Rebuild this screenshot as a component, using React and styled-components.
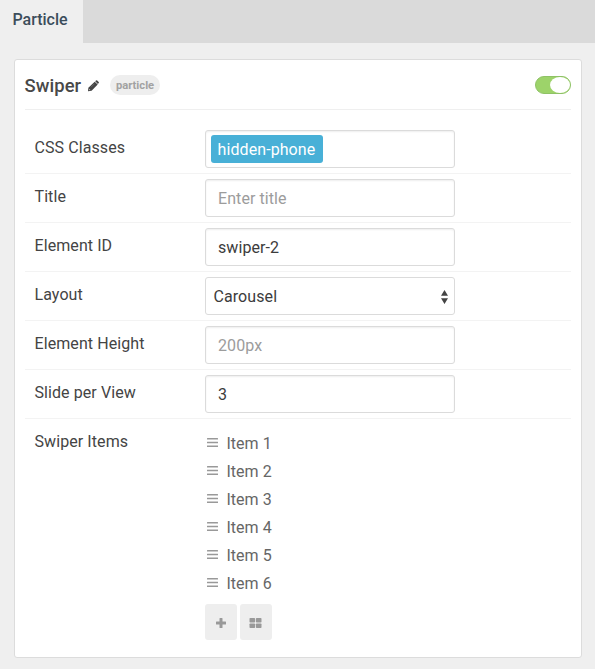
import React from 'react';
import styled, { createGlobalStyle } from 'styled-components';

const GlobalStyle = createGlobalStyle`
  * { box-sizing: border-box; }
  body {
    margin: 0;
    background: #efefef;
    color: #444;
    font: 16px/24px Roboto, sans-serif;
    letter-spacing: 0.08px;
    overflow: hidden;
  }
`;

const Page = styled.div`
  height: 669px;
  display: flex;
  flex-direction: column;
`;

const TabBar = styled.nav`
  height: 43px;
  flex: none;
  display: flex;
  background: #dadada;
`;

const Tab = styled.div`
  width: 83px;
  padding: 8px 0 0 12.4px;
  background: #efefef;
  color: #3b4d5b;
  font-weight: 500;
  letter-spacing: 0;
`;

const Card = styled.section`
  width: 568px;
  height: 599px;
  margin: 16px 0 0 14px;
  padding: 0 10px 0 9.5px;
  background: #fff;
  border: 1px solid #dcdcdc;
  border-radius: 3px;
`;

const Header = styled.header`
  height: 50px;
  display: flex;
  align-items: center;
  border-bottom: 1px solid #efefef;
  margin-bottom: 15px;
`;

const Heading = styled.h4`
  margin: 2px 0 0;
  font-size: 18.4px;
  font-weight: 500;
  color: #484848;
`;

const Badge = styled.span`
  height: 20px;
  margin-left: 10.5px;
  padding: 1px 6.3px 0;
  border-radius: 10px;
  background: #eee;
  color: #a2a2a2;
  font-size: 11.2px;
  line-height: 20px;
  font-weight: 700;
  letter-spacing: 0;
  margin-top: 1px;
`;

const Toggle = styled.div`
  width: 36px;
  height: 18px;
  margin-left: auto;
  border: 1px solid #8fc266;
  border-radius: 9px;
  background: #9dd36a;
  display: flex;
  justify-content: flex-end;
`;

const Knob = styled.div`
  width: 20px;
  height: 16px;
  border-radius: 10px / 8px;
  background: #fff;
`;

const Row = styled.div`
  display: flex;
  padding: 5px 0 5px 10px;
  border-bottom: ${(p) => (p.$last ? '0' : '1px solid #f3f3f3')};
`;

const Label = styled.div`
  width: 170.5px;
  flex: none;
  padding-top: 6px;
`;

const Field = styled.div`
  width: 250px;
  height: 38px;
  display: flex;
  align-items: center;
  justify-content: space-between;
  padding: ${(p) => p.$padding || '2px 12px 0'};
  border: 1px solid #dbdbdb;
  border-radius: 3px;
  box-shadow: ${(p) => (p.$flat ? 'none' : 'inset 0 1px 2px rgba(0, 0, 0, 0.07)')};
  color: ${(p) => (p.$muted ? '#9c9c9c' : '#3c3c3c')};
`;

const Tag = styled.span`
  height: 28px;
  padding: 1px 7.4px 0 6.6px;
  border-radius: 3px;
  background: #48b0d7;
  color: #fff;
  line-height: 28px;
`;

const Items = styled.ul`
  margin: 6px 0 0;
  padding: 0;
  list-style: none;
`;

const Item = styled.li`
  height: 28px;
  display: flex;
  align-items: center;
  padding-left: 2px;
  color: #666;
  line-height: 28px;
  letter-spacing: 0.04px;

  svg { margin: 0 8.4px 2px 0; }
`;

const Buttons = styled.div`
  display: flex;
  gap: 3px;
  margin-top: 6px;
`;

const IconButton = styled.div`
  width: 32px;
  height: 36px;
  display: flex;
  align-items: center;
  justify-content: center;
  border-radius: 3px;
  background: #eee;
  color: #999;
  padding: 2px 1px 0 0;
`;

const PencilMark = styled.svg`
  margin: 2px 0 0 7px;
`;

const Pencil = () => (
  <PencilMark width="11" height="12" viewBox="0 0 11 12" fill="#444">
    <path d="M0 11.3 .4 7.800 6.700 1.700 9.700 4.600 3.600 10.800Z" />
    <path d="m7.200 1.200.8-.8q.6-.5 1.200 0l1.500 1.500q.5.600 0 1.200l-.8.800Z" />
    <path d="m1.300 8.900 1.100 1.100-.6.200-.7-.7Z" fill="#fff" />
    <path d="M3 7.200 6.300 3.900" stroke="#999" strokeWidth=".4" />
  </PencilMark>
);

const Bars = () => (
  <svg width="11" height="10" viewBox="0 0 11 10" fill="#999">
    <rect y="0" width="11" height="1.600" rx=".2" />
    <rect y="3.700" width="11" height="1.600" rx=".2" />
    <rect y="7.400" width="11" height="1.600" rx=".2" />
  </svg>
);

const Plus = () => (
  <svg width="10" height="10" viewBox="0 0 10 10" fill="currentColor">
    <path d="M4 0h2q.5 0 .5.5v3h3q.5 0 .5.5v2q0 .5-.5.5h-3v3q0 .5-.5.5H4q-.5 0-.5-.5v-3h-3Q0 6.500 0 6V4q0-.5.5-.5h3v-3Q3.500 0 4 0Z" />
  </svg>
);

const Grid = () => (
  <svg width="13" height="10" viewBox="0 0 13 10" fill="currentColor">
    <rect x=".5" width="5.600" height="4.600" rx=".8" />
    <rect x="6.900" width="5.600" height="4.600" rx=".8" />
    <rect x=".5" y="5.400" width="5.600" height="4.600" rx=".8" />
    <rect x="6.900" y="5.400" width="5.600" height="4.600" rx=".8" />
  </svg>
);

const Arrows = () => (
  <svg width="7" height="14" viewBox="0 0 7 14" fill="#444">
    <path d="M3.500 0 7 5.700H0ZM0 8.300h7L3.500 14Z" />
  </svg>
);

export default function App() {
  return (
    <Page>
      <GlobalStyle />
      <TabBar>
        <Tab>Particle</Tab>
      </TabBar>
      <Card>
        <Header>
          <Heading>Swiper</Heading>
          <Pencil />
          <Badge>particle</Badge>
          <Toggle>
            <Knob />
          </Toggle>
        </Header>
        <Row>
          <Label>CSS Classes</Label>
          <Field $padding="0 5px">
            <Tag>hidden-phone</Tag>
          </Field>
        </Row>
        <Row>
          <Label>Title</Label>
          <Field $muted>Enter title</Field>
        </Row>
        <Row>
          <Label>Element ID</Label>
          <Field>swiper-2</Field>
        </Row>
        <Row>
          <Label>Layout</Label>
          <Field $flat $padding="1px 6px 0 7.5px">
            Carousel
            <Arrows />
          </Field>
        </Row>
        <Row>
          <Label>Element Height</Label>
          <Field $muted>200px</Field>
        </Row>
        <Row>
          <Label>Slide per View</Label>
          <Field>3</Field>
        </Row>
        <Row $last>
          <Label>Swiper Items</Label>
          <div>
            <Items>
              {[1, 2, 3, 4, 5, 6].map((n) => (
                <Item key={n}>
                  <Bars />
                  Item {n}
                </Item>
              ))}
            </Items>
            <Buttons>
              <IconButton>
                <Plus />
              </IconButton>
              <IconButton>
                <Grid />
              </IconButton>
            </Buttons>
          </div>
        </Row>
      </Card>
    </Page>
  );
}
